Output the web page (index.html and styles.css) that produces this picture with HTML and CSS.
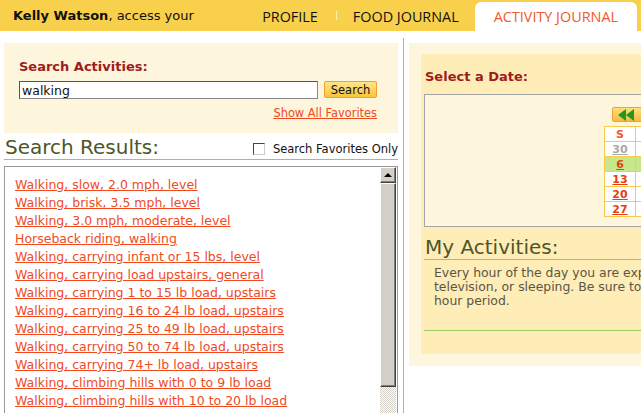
FILE: index.html
```html
<!doctype html>
<html>
<head>
  <title>Activity Journal</title>
  <link rel="stylesheet" href="styles.css">
</head>
<body>
  <header class="topbar">
    <div class="greeting"><strong>Kelly Watson</strong>, access your</div>
    <nav class="tabs">
      <a href="#" class="tab">PROFILE</a>
      <span class="sep"></span>
      <a href="#" class="tab">FOOD JOURNAL</a>
      <a href="#" class="tab active">ACTIVITY JOURNAL</a>
    </nav>
  </header>

  <div class="main">
    <section class="left">
      <div class="search-box">
        <h3>Search Activities:</h3>
        <div class="search-row">
          <input type="text" class="search-input" value="walking">
          <button class="search-btn">Search</button>
        </div>
        <div class="favs"><a href="#">Show All Favorites</a></div>
      </div>

      <div class="results-head">
        <h2>Search Results:</h2>
        <label class="fav-only"><span class="check"></span>Search Favorites Only</label>
      </div>

      <div class="results">
        <ul class="result-list">
          <li><a href="#">Walking, slow, 2.0 mph, level</a></li>
          <li><a href="#">Walking, brisk, 3.5 mph, level</a></li>
          <li><a href="#">Walking, 3.0 mph, moderate, level</a></li>
          <li><a href="#">Horseback riding, walking</a></li>
          <li><a href="#">Walking, carrying infant or 15 lbs, level</a></li>
          <li><a href="#">Walking, carrying load upstairs, general</a></li>
          <li><a href="#">Walking, carrying 1 to 15 lb load, upstairs</a></li>
          <li><a href="#">Walking, carrying 16 to 24 lb load, upstairs</a></li>
          <li><a href="#">Walking, carrying 25 to 49 lb load, upstairs</a></li>
          <li><a href="#">Walking, carrying 50 to 74 lb load, upstairs</a></li>
          <li><a href="#">Walking, carrying 74+ lb load, upstairs</a></li>
          <li><a href="#">Walking, climbing hills with 0 to 9 lb load</a></li>
          <li><a href="#">Walking, climbing hills with 10 to 20 lb load</a></li>
        </ul>
        <div class="scrollbar">
          <div class="sb-btn"><span class="arrow-up"></span></div>
          <div class="sb-thumb"></div>
          <div class="sb-track"></div>
        </div>
      </div>
    </section>

    <section class="right">
      <div class="panel">
        <div class="panel-inner">
          <h3>Select a Date:</h3>
          <div class="calendar">
            <div class="cal-nav">
              <button class="cal-btn"><span class="tri"></span><span class="tri"></span></button>
            </div>
            <table class="cal">
              <tr><th>S</th><th>M</th><th>T</th><th>W</th><th>T</th><th>F</th><th>S</th></tr>
              <tr><td class="other"><a href="#">30</a></td><td><a href="#">31</a></td><td><a href="#">1</a></td><td><a href="#">2</a></td><td><a href="#">3</a></td><td><a href="#">4</a></td><td><a href="#">5</a></td></tr>
              <tr class="current"><td><a href="#">6</a></td><td><a href="#">7</a></td><td><a href="#">8</a></td><td><a href="#">9</a></td><td><a href="#">10</a></td><td><a href="#">11</a></td><td><a href="#">12</a></td></tr>
              <tr><td><a href="#">13</a></td><td><a href="#">14</a></td><td><a href="#">15</a></td><td><a href="#">16</a></td><td><a href="#">17</a></td><td><a href="#">18</a></td><td><a href="#">19</a></td></tr>
              <tr><td><a href="#">20</a></td><td><a href="#">21</a></td><td><a href="#">22</a></td><td><a href="#">23</a></td><td><a href="#">24</a></td><td><a href="#">25</a></td><td><a href="#">26</a></td></tr>
              <tr><td><a href="#">27</a></td><td><a href="#">28</a></td><td><a href="#">29</a></td><td><a href="#">30</a></td><td><a href="#">31</a></td><td><a href="#">1</a></td><td><a href="#">2</a></td></tr>
            </table>
          </div>

          <h2>My Activities:</h2>
          <p class="intro">Every hour of the day you are expending energy, even when watching<br>television, or sleeping. Be sure to record your activities for the full 24<br>hour period.</p>
        </div>
      </div>
    </section>
  </div>
</body>
</html>
```

FILE: styles.css
```css
* {
  box-sizing: border-box;
  margin: 0;
  padding: 0;
}

body {
  font-family: "DejaVu Sans", Verdana, sans-serif;
  background: #fff;
  color: #222;
  overflow: hidden;
}

/* top bar */

.topbar {
  display: flex;
  align-items: center;
  height: 31px;
  background: #F9D04B;
}

.greeting {
  padding-left: 13px;
  font-size: 13px;
  color: #111;
}

.tabs {
  display: flex;
  align-items: center;
  align-self: stretch;
  margin-left: auto;
  margin-right: 4px;
  font-family: "Open Sans", sans-serif;
  font-size: 14.4px;
}

.tab {
  color: #111;
  text-decoration: none;
  padding-top: 1px;
}

.sep {
  width: 1px;
  height: 9px;
  margin: 0 16px 0 18px;
  background: #FFF1BE;
}

.tab + .tab { margin-left: 16px; }

.tab.active {
  align-self: flex-end;
  height: 29px;
  line-height: 29px;
  padding: 0 19px;
  background: #fff;
  color: #F0592A;
  border-radius: 6px 6px 0 0;
}

/* layout */

.main {
  display: flex;
  align-items: flex-start;
}

.left {
  flex: none;
  width: 394px;
  margin: 12px 0 0 4px;
}

.right {
  flex: none;
  width: 420px;
  margin-left: 5px;
  margin-top: 7px;
  padding: 5px 0 0 5px;
  border-left: 1px solid #9ACB5C;
  min-height: 380px;
}

h3 {
  font-size: 13px;
  color: #A01C1C;
  line-height: 16px;
}

h2 {
  font-size: 20px;
  font-weight: normal;
  color: #4E5628;
  line-height: 24px;
}

/* search */

.search-box {
  height: 90px;
  padding: 16px 21px 0 15px;
  background: #FDF5DC;
}

.search-row {
  display: flex;
  margin-top: 6px;
}

.search-input {
  width: 299px;
  height: 18px;
  padding: 0 2px;
  border: 1px solid #888;
  border-top-color: #555;
  border-left-color: #555;
  font-family: "DejaVu Sans", sans-serif;
  font-size: 12.5px;
  color: #111;
  background: #fff;
  outline: none;
}

.search-btn {
  width: 53px;
  height: 17px;
  margin-left: 6px;
  border: 1px solid #F0A030;
  border-radius: 2px;
  background: linear-gradient(#FFE58A, #F9C43C);
  font-family: "DejaVu Sans", sans-serif;
  font-size: 11.5px;
  color: #111;
}

.favs {
  margin-top: 7px;
  text-align: right;
  font-size: 11.4px;
}

.favs a { color: #F04A1E; }

.results-head {
  display: flex;
  align-items: center;
  justify-content: space-between;
  margin-top: 2px;
  border-bottom: 1px solid #9BC95A;
}

.results-head h2 { padding-left: 1px; }

.fav-only {
  display: flex;
  align-items: center;
  font-size: 11.5px;
  color: #111;
  margin-top: 3px;
}

.check {
  width: 12px;
  height: 12px;
  margin-right: 8px;
  border: 1px solid #444;
  border-right-color: #ccc;
  border-bottom-color: #ccc;
  background: #fff;
}

/* results */

.results {
  display: flex;
  height: 260px;
  margin-top: 6px;
  border: 1px solid #999;
  background: #fff;
}

.result-list {
  flex: 1;
  list-style: none;
  padding: 9px 0 0 10px;
  font-size: 12.5px;
  line-height: 18px;
}

.result-list a { color: #F04A1E; }

.scrollbar {
  display: flex;
  flex-direction: column;
  width: 16px;
  margin: 0 1px 0 0;
}

.sb-btn,
.sb-thumb {
  background: #D4D0C8;
  border: 1px solid #fff;
  border-right-color: #404040;
  border-bottom-color: #404040;
  box-shadow: inset -1px -1px #808080;
}

.sb-btn {
  height: 16px;
  display: flex;
  align-items: center;
  justify-content: center;
}

.arrow-up {
  width: 0;
  height: 0;
  border-left: 4px solid transparent;
  border-right: 4px solid transparent;
  border-bottom: 4px solid #000;
}

.sb-thumb { height: 204px; }

.sb-track {
  flex: 1;
  background: repeating-conic-gradient(#D4D0C8 0 25%, #fff 0 50%) 0 0 / 2px 2px;
}

/* date panel */

.panel {
  padding: 10px 0 11px 11px;
  background: #FDF5DC;
}

.panel-inner {
  padding: 15px 0 23px 3px;
  background: #FEEDB6;
  border: 1px solid #FFF8E4;
  border-right: 0;
}

.panel-inner h3 { padding-left: 1px; }

.calendar {
  height: 133px;
  margin-top: 9px;
  padding: 12px 0 0 179px;
  border: 1px solid #A5A5A5;
  background: #FDF5DC;
}

.cal-nav { padding-left: 8px; height: 19px; }

.cal-btn {
  display: flex;
  align-items: center;
  width: 40px;
  height: 15px;
  padding-left: 5px;
  border: 1px solid #E9A43C;
  border-radius: 2px;
  background: linear-gradient(#FFE07A, #F8BA40);
}

.tri {
  width: 0;
  height: 0;
  border-top: 6px solid transparent;
  border-bottom: 6px solid transparent;
  border-right: 8px solid #1E9A1E;
}

.cal {
  border-collapse: collapse;
  font-size: 11px;
  font-weight: bold;
  background: #fff;
}

.cal th,
.cal td {
  width: 31px;
  height: 15px;
  padding: 0;
  border: 1px solid #F7CB4E;
  text-align: center;
  line-height: 13px;
}

.cal th { color: #F05A28; }

.cal a { color: #E8400C; }

.cal .other a { color: #A8A8A8; }

.cal .current td { background: #C8E68A; }

.panel-inner h2 {
  margin-top: 8px;
  padding-left: 1px;
  border-bottom: 1px solid #9BC95A;
}

.intro {
  padding: 6px 0 22px 10px;
  border-bottom: 1px solid #9BC95A;
  font-size: 12.4px;
  line-height: 14px;
  color: #5A5548;
  white-space: nowrap;
}
```
